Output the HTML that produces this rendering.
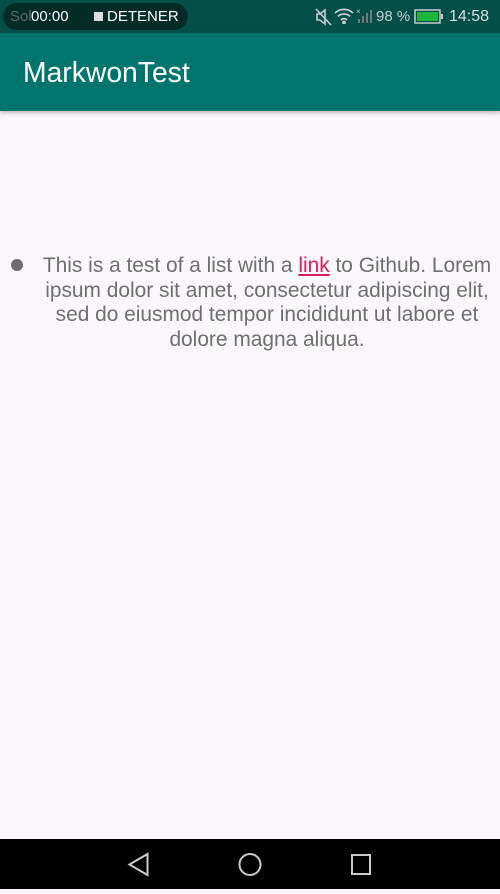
<!DOCTYPE html>
<html><head><meta charset="utf-8"><style>
*{margin:0;padding:0;box-sizing:border-box}
body{width:500px;height:889px;background:#f9f7fa;font-family:"Liberation Sans",sans-serif;position:relative;overflow:hidden}
.sb{position:absolute;top:0;left:0;width:500px;height:33px;background:#024f4a;color:#fff;font-size:15px}
.pill{position:absolute;left:3px;top:3px;width:185px;height:27px;border-radius:14px;background:#032c28}
.pill span{position:absolute;top:5px}
.ab{position:absolute;top:33px;left:0;width:500px;height:78px;background:#00756e;box-shadow:0 2px 4px rgba(0,0,0,.25)}
.ab h1{position:absolute;left:23px;top:23px;font-size:28.3px;font-weight:normal;color:#fff}
.bul{position:absolute;left:11px;top:259px;width:12px;height:12px;border-radius:50%;background:#6d6d6d}
.txt{position:absolute;left:36px;top:254px;width:462px;text-align:center;font-size:20.9px;line-height:24.7px;color:#6f6f6f}
.txt a{color:#d81b60;text-decoration:underline}
.nav{position:absolute;left:0;top:839px;width:500px;height:50px;background:#000}
</style></head><body>
<div class="sb">
 <div class="pill"><span style="left:7px;color:#666">Sol</span><span style="left:28px">00:00</span><span style="left:91px;top:9px;width:9px;height:9px;background:#ddd"></span><span style="left:104px">DETENER</span></div>
 <svg style="position:absolute;left:314px;top:8px" width="20" height="18" viewBox="0 0 20 18" fill="none" stroke="#ccc" stroke-width="1.6"><path d="M3 6h3l5-4v14l-5-4H3z"/><path d="M2 1l15 16"/></svg>
 <svg style="position:absolute;left:334px;top:8px" width="20" height="16" viewBox="0 0 20 16" fill="none" stroke="#ccc" stroke-width="1.8"><path d="M1 5a13 13 0 0 1 18 0M4 8.5a8.5 8.5 0 0 1 12 0M7 12a4 4 0 0 1 6 0"/><circle cx="10" cy="14.5" r="1" fill="#ccc"/></svg>
 <svg style="position:absolute;left:356px;top:7px" width="16" height="18" viewBox="0 0 16 18" fill="#777"><rect x="2" y="12" width="2" height="4"/><rect x="6" y="9" width="2" height="7"/><rect x="10" y="6" width="2" height="10"/><rect x="14" y="3" width="2" height="13"/><text x="0" y="7" font-size="8" fill="#ccc">×</text></svg>
 <span style="position:absolute;left:376px;top:8px;color:#ccc">98 %</span>
 <svg style="position:absolute;left:414px;top:9px" width="30" height="16" viewBox="0 0 30 16"><rect x="1" y="1" width="25" height="13" fill="none" stroke="#ccc" stroke-width="1.5"/><rect x="3" y="3" width="21" height="9" fill="#1fb53c"/><rect x="27" y="5" width="2" height="5" fill="#ccc"/></svg>
 <span style="position:absolute;left:449px;top:8px;color:#ddd;font-size:16px">14:58</span>
</div>
<div class="ab"><h1>MarkwonTest</h1></div>
<div class="bul"></div>
<div class="txt">This is a test of a list with a <a>link</a> to Github. Lorem ipsum dolor sit amet, consectetur adipiscing elit, sed do eiusmod tempor incididunt ut labore et dolore magna aliqua.</div>
<div class="nav">
 <svg width="500" height="50" fill="none" stroke="#ccc" stroke-width="2"><path d="M129.5 25.5L147.5 15v21z"/><circle cx="250" cy="25.5" r="10.5"/><rect x="352" y="16" width="18" height="19"/></svg>
</div>
</body></html>
